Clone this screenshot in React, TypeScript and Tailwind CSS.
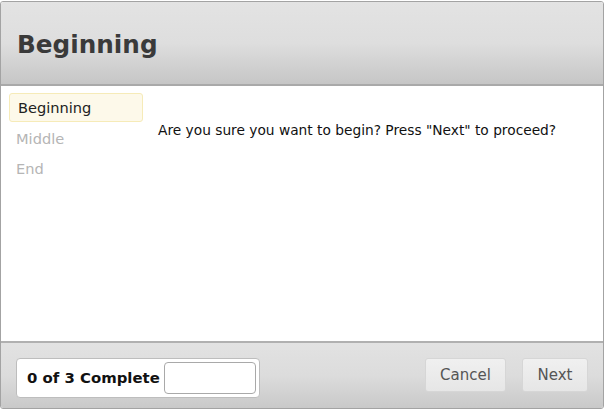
import React from "react";

export default function App() {
  const font = { fontFamily: '"DejaVu Sans", Verdana, sans-serif' };
  return (
    <div className="w-[605px] h-[409px] bg-white" style={font}>
      <div className="w-[604px] h-[408px] mt-[1px] border border-[#a3a3a3] rounded-[3px] flex flex-col overflow-hidden">
        <div className="h-[84px] shrink-0 bg-gradient-to-b from-[#e3e3e3] via-[#dedede] to-[#c6c6c6] border-b-2 border-[#a9a9a9] flex items-center pl-[16px]">
          <h1 className="text-[24.7px] font-bold text-[#3a3a3a] mt-[4px]">Beginning</h1>
        </div>
        <div className="flex-1 bg-white flex border-b-2 border-[#b0b0b0]">
          <div className="w-[134px] ml-[8px] mt-[7px] flex flex-col">
            <div className="h-[29px] mb-[2px] rounded-[3px] bg-[#fdf9ea] border border-[#f6ebb8] flex items-center pl-[8px] text-[14.6px] text-[#222]">Beginning</div>
            <div className="h-[30px] flex items-center pl-[7px] text-[14.6px] text-[#b5b5b5]">Middle</div>
            <div className="h-[30px] flex items-center pl-[7px] text-[14.6px] text-[#b5b5b5]">End</div>
          </div>
          <div className="ml-[15px] mt-[34px] text-[13.75px] text-[#111]">Are you sure you want to begin? Press "Next" to proceed?</div>
        </div>
        <div className="h-[65px] shrink-0 bg-gradient-to-b from-[#e2e2e2] via-[#dcdcdc] to-[#c9c9c9] flex items-start pt-[15px] pl-[15px] pr-[15px]">
          <div className="h-[40px] w-[244px] bg-white border border-[#bdbdbd] rounded-[4px] flex items-center pl-[10px] pr-[3px]">
            <span className="text-[14.9px] font-bold text-[#111]">0 of 3 Complete</span>
            <div className="ml-auto w-[92px] h-[32px] border border-[#a9a9a9] rounded-[4px] bg-white" />
          </div>
          <div className="flex-1" />
          <button className="w-[81px] h-[34px] rounded-[3px] border border-[#d6d6d6] bg-gradient-to-b from-[#f0f0f0] to-[#e6e6e6] text-[15px] text-[#555]">Cancel</button>
          <button className="ml-[16px] w-[66px] h-[34px] rounded-[3px] border border-[#d6d6d6] bg-gradient-to-b from-[#f0f0f0] to-[#e6e6e6] text-[15px] text-[#555]">Next</button>
        </div>
      </div>
    </div>
  );
}
